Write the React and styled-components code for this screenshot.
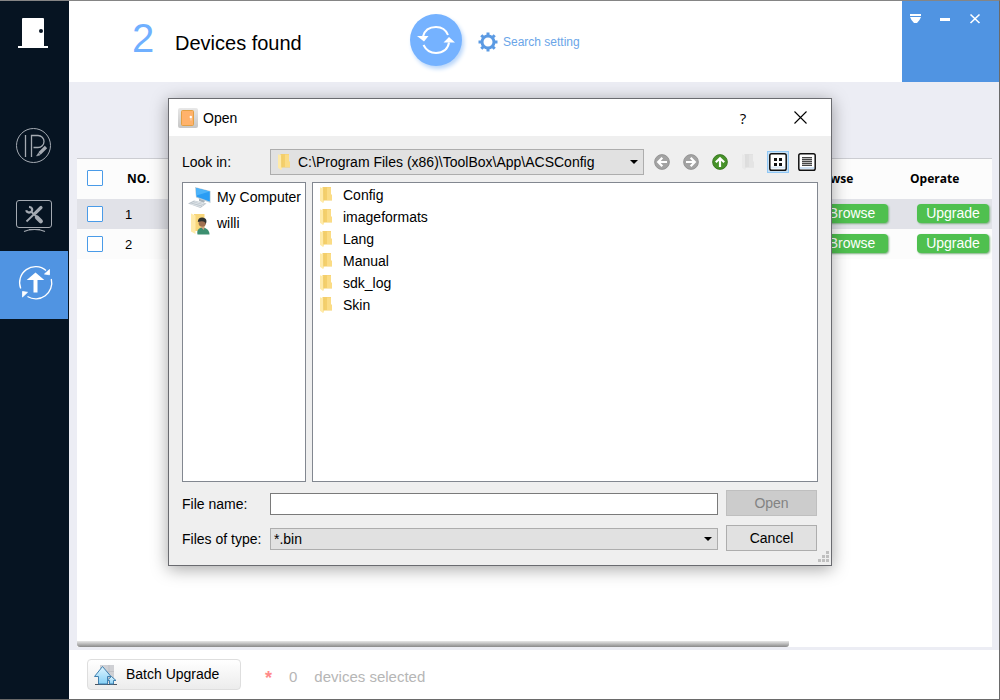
import React, { useState } from "react";
import styled, { createGlobalStyle, css } from "styled-components";

const GlobalStyle = createGlobalStyle`
  *, *::before, *::after { box-sizing: border-box; }
  body { margin: 0; background: #fff; }
  body, button, input, select { font-family: "Liberation Sans", Arial, sans-serif; font-size: 14px; color: #000; }
  svg { display: block; }
`;

const Window = styled.div`
  position: relative;
  display: flex;
  min-height: 100vh;
  border: 1px solid #6a6a6a;
  border-top-color: #858585;
  border-left: 0;
`;

/* ---------- side bar ---------- */
const Sidebar = styled.nav`
  flex: none;
  width: 69px;
  background: #061422;
`;
const Brand = styled.div`
  height: 114px;
  padding: 17px 18px;
`;
const NavList = styled.ul`
  margin: 0;
  padding: 0;
  list-style: none;
`;
const NavButton = styled.button`
  display: block;
  height: 68px;
  width: 68px;
  margin: 0;
  padding: 0;
  border: 0;
  background: ${(p) => (p.$active ? "#5094e2" : "transparent")};
  color: ${(p) => (p.$active ? "#fff" : "#a4aab2")};
`;

/* ---------- main column ---------- */
const Main = styled.main`
  flex: 1;
  min-width: 0;
  display: flex;
  flex-direction: column;
  background: #fff;
`;
const Header = styled.header`
  display: flex;
  align-items: center;
  height: 81px;
`;
const Summary = styled.h1`
  display: flex;
  align-items: center;
  flex: 0 0 341px;
  margin: 0;
  padding: 2px 0 0 63px;
  font-weight: 400;
  font-size: 20px;
  line-height: 24px;
`;
const Count = styled.span`
  width: 43px;
  padding-bottom: 10px;
  font-size: 40px;
  line-height: 40px;
  color: #70b0ff;
`;
const RefreshButton = styled.button`
  flex: none;
  width: 52px;
  height: 52px;
  margin: 0 0 3px;
  padding: 0;
  border: 0;
  border-radius: 50%;
  background: #75b2ff;
  box-shadow: 2px 3px 4px #b9d6fa;
`;
const SettingButton = styled.button`
  display: flex;
  align-items: center;
  gap: 5px;
  margin: 0 auto 0 16px;
  padding: 0;
  border: 0;
  background: none;
  color: #6aa5e8;
  font-size: 12px;
`;
const WindowControls = styled.div`
  align-self: stretch;
  display: flex;
  align-items: flex-start;
  width: 97px;
  padding: 7px;
  gap: 8px;
  background: #5094e2;
`;
const ControlButton = styled.button`
  width: 22px;
  height: 22px;
  margin: 0;
  padding: 0;
  border: 0;
  background: none;
`;

const Workspace = styled.section`
  flex: 1;
  display: flex;
  flex-direction: column;
  padding: 76px 7px 3px 8px;
  background: #ecedf4;
`;
const TablePanel = styled.div`
  flex: 1;
  display: flex;
  flex-direction: column;
  justify-content: space-between;
  border-top: 1px solid #cccdd2;
  background: #fff;
`;
const DeviceTable = styled.table`
  width: 100%;
  table-layout: fixed;
  border-collapse: collapse;
`;
const Col = styled.col`
  width: ${(p) => p.$w};
`;
const Row = styled.tr`
  height: ${(p) => (p.$head ? "40px" : "30px")};
  background: ${(p) => (p.$shaded ? "#e1e2e8" : "#fcfcfc")};
`;
const cell = css`
  text-align: left;
  white-space: nowrap;
`;
const Th = styled.th`
  ${cell}
  padding: 0 0 2px ${(p) => p.$pad || 0}px;
  font: 700 12px "Open Sans", sans-serif;
`;
const Td = styled.td`
  ${cell}
  padding: 0 0 0 ${(p) => p.$pad || 0}px;
  font-size: 13px;
`;
const CheckBox = styled.input`
  appearance: none;
  display: block;
  width: 16px;
  height: 16px;
  margin: 0;
  border: 1px solid #4a9be8;
  border-radius: 1px;
  background: #fff;
  &:checked { background: #5094e2; }
`;
const GreenButton = styled.button`
  display: block;
  width: 72px;
  height: 19px;
  margin: 0 0 2px;
  padding: 0;
  border: 0;
  border-radius: 4px;
  background: #4fc04f;
  box-shadow: 1px 1px 2px #7fae82;
  color: #fff;
  line-height: 19px;
`;
const ScrollTrack = styled.div`
  height: 6px;
`;
const ScrollThumb = styled.div`
  width: calc(100% * 7 / 9);
  height: 6px;
  border-radius: 0 0 3px 3px;
  background: linear-gradient(#e6e6e6, #c8c8c8 35%, #888);
`;

const Footer = styled.footer`
  display: flex;
  align-items: center;
  height: 49px;
  padding-left: 18px;
  color: #b6b6b6;
  font-size: 15px;
`;
const BatchButton = styled.button`
  display: flex;
  align-items: center;
  gap: 8px;
  width: 154px;
  height: 31px;
  margin: 0;
  padding: 0 0 1px 6px;
  border: 1px solid #dedede;
  border-radius: 4px;
  background: linear-gradient(#fff, #ececec);
`;
const Selection = styled.p`
  display: flex;
  gap: 17px;
  margin: 0;
  padding: 6px 0 0 24px;
`;
const Star = styled.span`
  color: #ff8a8a;
  font-weight: 700;
  line-height: 20px;
  font-size: 18px;
`;

/* ---------- dialog ---------- */
const DialogLayer = styled.div`
  position: absolute;
  inset: 0;
  display: flex;
  justify-content: center;
  align-items: flex-start;
  padding-top: 97px;
`;
const Dialog = styled.section`
  width: 664px;
  margin-left: 1px;
  border: 1px solid #6a6b70;
  background: #efefef;
  box-shadow: 0 3px 16px rgba(0, 0, 0, 0.36);
`;
const TitleBar = styled.header`
  display: flex;
  align-items: center;
  height: 37px;
  padding: 0 16px 0 9px;
  gap: 5px;
  background: #fff;
`;
const DialogTitle = styled.h2`
  flex: 1;
  margin: 0;
  font-size: 14px;
  font-weight: 400;
`;
const TitleButton = styled.button`
  display: grid;
  place-items: center;
  width: 30px;
  height: 30px;
  margin: 0 0 0 22px;
  padding: 0;
  border: 0;
  background: none;
  font: 15px "Open Sans", sans-serif;
`;
const DialogBody = styled.form`
  position: relative;
  display: flex;
  flex-direction: column;
  padding: 13px 13px 12px;
`;
const FormRow = styled.div`
  display: flex;
  align-items: center;
  height: ${(p) => (p.$gap ? "28px" : "26px")};
  margin-top: ${(p) => p.$gap || 0}px;
`;
const Label = styled.label`
  flex: none;
  width: 88px;
  white-space: nowrap;
`;
const SelectBox = styled.div`
  position: relative;
  flex: 1;
  min-width: 0;
  svg { position: absolute; left: 7px; top: 4px; pointer-events: none; }
  &::after {
    content: "";
    position: absolute;
    right: 6px;
    top: calc(50% - 2px);
    border: 4px solid transparent;
    border-top-color: #000;
    border-bottom: 0;
    pointer-events: none;
  }
`;
const Select = styled.select`
  appearance: none;
  display: block;
  width: 100%;
  height: ${(p) => (p.$icon ? "26px" : "22px")};
  margin: 0;
  padding: 0 20px 0 ${(p) => (p.$icon ? "27px" : "3px")};
  border: 1px solid #adadad;
  border-radius: 0;
  background: #e1e1e1;
`;
const TextInput = styled.input`
  flex: 1;
  min-width: 0;
  height: 22px;
  margin: 0;
  padding: 0 3px;
  border: 1px solid #7a7a7a;
  background: #fff;
`;
const PushButton = styled.button`
  flex: none;
  align-self: flex-start;
  width: 91px;
  height: 26px;
  margin: 0 1px 0 8px;
  padding: 0;
  border: 1px solid #adadad;
  background: #e1e1e1;
  &:disabled { border-color: #bfbfbf; background: #ccc; color: #838383; }
`;
const Tools = styled.div`
  display: flex;
  align-items: center;
  gap: 7px;
  padding-left: 7px;
  width: 174px;
`;
const ToolButton = styled.button`
  display: grid;
  place-items: center;
  flex: none;
  width: 22px;
  height: 22px;
  margin: 0;
  padding: 0;
  border: 1px solid ${(p) => (p.$on ? "#90c8f6" : "transparent")};
  background: ${(p) => (p.$on ? "#c8e0f4" : "none")};
`;
const Panes = styled.div`
  display: flex;
  gap: 6px;
  height: 300px;
  margin-top: 7px;
`;
const Pane = styled.ul`
  flex: ${(p) => (p.$side ? "none" : "1")};
  width: ${(p) => (p.$side ? "124px" : "auto")};
  margin: 0;
  padding: ${(p) => (p.$side ? "1px 0 0 5px" : "1px 0 0 6px")};
  border: 1px solid #828790;
  background: #fff;
  list-style: none;
`;
const Item = styled.li`
  display: flex;
  align-items: center;
  height: ${(p) => (p.$tall ? "26px" : "22px")};
  gap: ${(p) => (p.$tall ? "5px" : "8px")};
  white-space: nowrap;
`;
const Grip = styled.svg`
  position: absolute;
  right: 2px;
  bottom: 2px;
`;

/* ---------- drawings ---------- */
const DoorLogo = () => (
  <svg width="30" height="30" viewBox="0 0 30 30" fill="#fff" aria-label="ToolBox">
    <path d="M5 0h20a1 1 0 0 1 1 1v27h4v2H0v-2h4V1a1 1 0 0 1 1-1z" />
    <circle cx="23" cy="13" r="2" fill="#061422" />
  </svg>
);
const IpIcon = () => (
  <svg width="68" height="68" viewBox="0 0 68 68" fill="none" stroke="currentColor">
    <circle cx="33.500" cy="30.500" r="17" />
    <path d="M25.500 20v22M31.500 42V20.500h6.500a6 6 0 0 1 0 12h-4.500" strokeWidth="1.300" />
    <path d="M46 32l-6.500 6.500" strokeWidth="3.200" />
    <path d="M38.500 38l1.500 2-3.500 1z" fill="currentColor" strokeWidth=".5" />
  </svg>
);
const ToolsIcon = () => (
  <svg width="68" height="68" viewBox="0 0 68 68" fill="none" stroke="currentColor">
    <rect x="16.500" y="17.500" width="35" height="27" rx="2.500" />
    <path d="M24 48.500q4-2 10.500-2t10.500 2M29 46.500h11" strokeWidth="1.200" />
    <path d="M31 28.500L37.500 34.500" strokeWidth="2" />
    <path d="M37 34.500l3.800 3.800" strokeWidth="4.200" strokeLinecap="round" />
    <path d="M41 24.500L26.500 38.500" strokeWidth="1.800" />
    <path d="M41 24.500L35.500 29.800" strokeWidth="3.200" strokeLinecap="round" />
    <path d="M29 23.800c3 .2 4 2.500 2.500 4.700-2 1.800-4.700 1-5.300-1.300" strokeWidth="2.300" />
  </svg>
);
const UpgradeIcon = () => (
  <svg width="68" height="68" viewBox="0 0 68 68" fill="none" stroke="currentColor" strokeWidth="1.300">
    <path d="M20.700 37.500A16 16 0 0 1 46 19.500" />
    <path d="M51.300 28A16 16 0 0 1 27.500 45.500" />
    <path d="M44.500 23l5 .8v-5.300zM27.500 41.300l-5-.8v5.500z" fill="currentColor" strokeWidth=".8" />
    <path d="M35.500 21.500l8.800 7.500h-6.800v12.500h-4V29h-6.800z" fill="currentColor" stroke="none" />
  </svg>
);
const RefreshIcon = () => (
  <svg width="52" height="52" viewBox="0 0 52 52" fill="none" stroke="#fff" strokeWidth="2">
    <path d="M13 22.500C14.500 16.500 19.500 13 26 13c5.500 0 10 3 12 8" />
    <path d="M39 28.500C38 35 33 39 26 39c-5.500 0-10-3-12.500-8" />
    <path d="M7 22h11.500L14 27.500zM45 28.500H33.500L39 23z" fill="#fff" stroke="none" />
  </svg>
);
const GearIcon = () => (
  <svg width="20" height="20" viewBox="0 0 20 20" fill="none" stroke="#5b9ae3">
    <circle cx="10" cy="10" r="6" strokeWidth="3" />
    {[0, 45, 90, 135, 180, 225, 270, 315].map((a) => (
      <path key={a} d="M10 .500v3" strokeWidth="3" transform={`rotate(${a} 10 10)`} />
    ))}
  </svg>
);
const MenuGlyph = () => (
  <svg width="22" height="22" viewBox="0 0 22 22" fill="#fff">
    <path d="M1 6h11v2H1zM1 9h11l-1.500 3L8 15H5l-2.500-3z" />
  </svg>
);
const MinGlyph = () => (
  <svg width="22" height="22" viewBox="0 0 22 22" fill="#fff">
    <path d="M1 10h10v3H1z" />
  </svg>
);
const CloseGlyph = () => (
  <svg width="22" height="22" viewBox="0 0 22 22" stroke="#fff" strokeWidth="1.600">
    <path d="M1.500 6.500l9 8.500M10.500 6.500l-9 8.500" />
  </svg>
);
const BatchIcon = () => (
  <svg width="24" height="24" viewBox="0 0 24 24" strokeLinejoin="round">
    <defs>
      <linearGradient id="ice" x1="0" y1="0" x2="0" y2="1">
        <stop offset="0" stopColor="#dff5ff" />
        <stop offset="1" stopColor="#86d0f6" />
      </linearGradient>
    </defs>
    <path d="M6 3h14v18H6z" fill="#cfd0d4" />
    <path d="M12 9.500h8M15 3v14" stroke="#c0c1c6" />
    <path d="M1 22.500h22" stroke="#4c5560" />
    <path d="M8.500 4.500L17 14.500h-3.500V22h-9v-7.500H.500z" fill="url(#ice)" stroke="#3f7fae" />
    <path d="M17.500 14.500l4.500 4h-2.500V22h-4v-3.500H13z" fill="url(#ice)" stroke="#3f7fae" />
  </svg>
);
const AppIcon = () => (
  <svg width="20" height="20" viewBox="0 0 20 20">
    <defs>
      <linearGradient id="plate" x1="0" y1="0" x2="0" y2="1">
        <stop offset="0" stopColor="#e8e8e8" />
        <stop offset="1" stopColor="#c6c6c6" />
      </linearGradient>
    </defs>
    <rect width="20" height="20" rx="2" fill="url(#plate)" />
    <rect x="3.500" y="2.500" width="12" height="15" rx="1" fill="#ffb26b" stroke="#e2a044" />
    <circle cx="12.800" cy="9" r="1.200" fill="#fff" />
    <path d="M13 10v2.500" stroke="#f3dcc0" />
  </svg>
);
const FolderShape = ({ pale }) => (
  <>
    <path d="M3.500 1H12v7.500l1 .5v5.500H3.500z" fill={pale ? "#dedede" : "#f4cf6c"} />
    <path d="M8 1.500h4v7l1 .5v5H8z" fill={pale ? "#e4e4e4" : "#fbdc85"} />
    <path d="M1 1.200l3.500 1.300.5 13.500-1 1L1 14.800z" fill={pale ? "#e9e9e9" : "#ffeaa8"} />
    <path d="M4.700 2.500V14.500" stroke={pale ? "#d8d8d8" : "#ecc660"} strokeWidth=".8" />
  </>
);
const FolderIcon = ({ pale }) => (
  <svg width="16" height="18" viewBox="0 0 16 18">
    <FolderShape pale={pale} />
  </svg>
);
const ComputerIcon = () => (
  <svg width="24" height="24" viewBox="0 0 24 24">
    <path d="M7 2l15.500 4v12L8 12.500z" fill="#b9cdd9" />
    <path d="M8 3l13.800 3.500v10L8.600 11.700z" fill="#2a9df4" />
    <path d="M8 3l13.800 3.500-13.400 4z" fill="#4db4fa" />
    <path d="M11 13.500l6 2.200-1 2-5-1.700z" fill="#a7b2ba" />
    <path d="M0 18.500L6 15.500l12.500 3-6 4.500z" fill="#bcc5cc" />
    <path d="M2.500 18.800l10.500 3M4.500 17.500l10.500 2.800M6.500 16.500l10 2.500" stroke="#eef2f5" strokeWidth=".7" />
  </svg>
);
const UserFolderIcon = () => (
  <svg width="24" height="24" viewBox="0 0 24 24">
    <path d="M6 3h10.500v17H6z" fill="#f8d67a" />
    <path d="M3 2.500l4.500 2V23L3 20.500z" fill="#ffeaa8" />
    <path d="M9.500 23.500c-1-4 1-6.500 4.500-7 4.500.2 7.500 3 7.500 7z" fill="#3d8f70" />
    <path d="M12.500 16l3.500 3 .5-4z" fill="#cfa283" />
    <circle cx="14.300" cy="12" r="3.700" fill="#a07050" />
    <path d="M9.800 11c0-3.500 2.200-4.700 4.700-4.500 3.500.3 5 3 3.300 6.500-.8-2.500-2.800-3.500-8-2z" fill="#2f3230" />
  </svg>
);
const ArrowIcon = ({ turn, fill, edge }) => (
  <svg width="16" height="16" viewBox="0 0 16 16">
    <circle cx="8" cy="8" r="7.400" fill={fill} stroke={edge} strokeWidth=".8" />
    <path d="M8 13V4.500M3.800 8.300L8 4.200l4.200 4.100" fill="none" stroke="#fff" strokeWidth="2.200" transform={`rotate(${turn} 8 8)`} />
  </svg>
);
const ListViewIcon = () => (
  <svg width="18" height="18" viewBox="0 0 18 18">
    <rect x=".8" y=".8" width="16.400" height="16.400" rx="1.800" fill="#fff" stroke="#111" strokeWidth="1.500" />
    <path d="M2 14.500h14" stroke="#dbeaf8" strokeWidth="2" />
    <path d="M5 5h3v3H5zM10 5h3v3h-3zM5 10h3v3H5zM10 10h3v3h-3z" fill="#111" />
  </svg>
);
const DetailViewIcon = () => (
  <svg width="18" height="18" viewBox="0 0 18 18">
    <rect x=".8" y=".8" width="16.400" height="16.400" rx="1.800" fill="#fff" stroke="#111" strokeWidth="1.500" />
    <path d="M2 15h14" stroke="#cfe2f5" strokeWidth="2" />
    <path d="M4 4h10v9H4z" fill="#b8b8b8" />
    <path d="M4 4.500h10M4 6.500h10M4 8.500h10M4 10.500h10M4 12.500h10" stroke="#444" />
  </svg>
);
const XIcon = () => (
  <svg width="13" height="13" viewBox="0 0 13 13" stroke="#000" strokeWidth="1.100">
    <path d="M.500 .500l12 12M12.500 .500l-12 12" />
  </svg>
);

const devices = [1, 2];
const folders = ["Config", "imageformats", "Lang", "Manual", "sdk_log", "Skin"];

function FileDialog() {
  const [name, setName] = useState("");
  return (
    <Dialog role="dialog" aria-labelledby="dialog-title">
      <TitleBar>
        <AppIcon />
        <DialogTitle id="dialog-title">Open</DialogTitle>
        <TitleButton type="button" aria-label="Help">?</TitleButton>
        <TitleButton type="button" aria-label="Close"><XIcon /></TitleButton>
      </TitleBar>
      <DialogBody onSubmit={(e) => e.preventDefault()}>
        <FormRow>
          <Label htmlFor="look-in">Look in:</Label>
          <SelectBox>
            <Select id="look-in" $icon>
              <option>C:\Program Files (x86)\ToolBox\App\ACSConfig</option>
            </Select>
            <FolderIcon />
          </SelectBox>
          <Tools>
            <ToolButton type="button" aria-label="Back"><ArrowIcon turn={-90} fill="#a3a3a3" edge="#8c8c8c" /></ToolButton>
            <ToolButton type="button" aria-label="Forward"><ArrowIcon turn={90} fill="#a3a3a3" edge="#8c8c8c" /></ToolButton>
            <ToolButton type="button" aria-label="Parent directory"><ArrowIcon turn={0} fill="#47922a" edge="#2f6e16" /></ToolButton>
            <ToolButton type="button" aria-label="New folder"><FolderIcon pale /></ToolButton>
            <ToolButton type="button" aria-label="List view" $on><ListViewIcon /></ToolButton>
            <ToolButton type="button" aria-label="Detail view"><DetailViewIcon /></ToolButton>
          </Tools>
        </FormRow>
        <Panes>
          <Pane $side>
            <Item $tall><ComputerIcon />My Computer</Item>
            <Item $tall><UserFolderIcon />willi</Item>
          </Pane>
          <Pane>
            {folders.map((f) => (
              <Item key={f}><FolderIcon />{f}</Item>
            ))}
          </Pane>
        </Panes>
        <FormRow $gap={8}>
          <Label htmlFor="file-name">File name:</Label>
          <TextInput id="file-name" value={name} onChange={(e) => setName(e.target.value)} />
          <PushButton type="submit" disabled={!name}>Open</PushButton>
        </FormRow>
        <FormRow $gap={7}>
          <Label htmlFor="file-type">Files of type:</Label>
          <SelectBox>
            <Select id="file-type">
              <option>*.bin</option>
            </Select>
          </SelectBox>
          <PushButton type="button">Cancel</PushButton>
        </FormRow>
        <Grip width="11" height="12" viewBox="0 0 11 12" fill="#bfbfbf">
          <path d="M8 0h3v3H8zM4 4h3v3H4zM8 4h3v3H8zM0 8h3v3H0zM4 8h3v3H4zM8 8h3v3H8z" />
        </Grip>
      </DialogBody>
    </Dialog>
  );
}

export default function App() {
  return (
    <>
      <GlobalStyle />
      <Window>
        <Sidebar>
          <Brand><DoorLogo /></Brand>
          <NavList>
            <li><NavButton aria-label="IP settings"><IpIcon /></NavButton></li>
            <li><NavButton aria-label="System tools"><ToolsIcon /></NavButton></li>
            <li><NavButton aria-label="Device upgrade" $active><UpgradeIcon /></NavButton></li>
          </NavList>
        </Sidebar>
        <Main>
          <Header>
            <Summary><Count>2</Count>Devices found</Summary>
            <RefreshButton aria-label="Refresh"><RefreshIcon /></RefreshButton>
            <SettingButton><GearIcon />Search setting</SettingButton>
            <WindowControls>
              <ControlButton aria-label="Menu"><MenuGlyph /></ControlButton>
              <ControlButton aria-label="Minimize"><MinGlyph /></ControlButton>
              <ControlButton aria-label="Close"><CloseGlyph /></ControlButton>
            </WindowControls>
          </Header>
          <Workspace>
            <TablePanel>
              <DeviceTable>
                <colgroup>
                  <Col $w="48px" />
                  <Col $w="auto" />
                  <Col $w="101px" />
                  <Col $w="85px" />
                </colgroup>
                <thead>
                  <Row $head>
                    <Th $pad={10}><CheckBox type="checkbox" aria-label="Select all devices" /></Th>
                    <Th $pad={2}>NO.</Th>
                    <Th $pad={3}>Browse</Th>
                    <Th $pad={3}>Operate</Th>
                  </Row>
                </thead>
                <tbody>
                  {devices.map((n) => (
                    <Row key={n} $shaded={n % 2 === 1}>
                      <Td $pad={10}><CheckBox type="checkbox" aria-label={`Select device ${n}`} /></Td>
                      <Td>{n}</Td>
                      <Td $pad={10}><GreenButton>Browse</GreenButton></Td>
                      <Td $pad={10}><GreenButton>Upgrade</GreenButton></Td>
                    </Row>
                  ))}
                </tbody>
              </DeviceTable>
              <ScrollTrack><ScrollThumb /></ScrollTrack>
            </TablePanel>
          </Workspace>
          <Footer>
            <BatchButton><BatchIcon />Batch Upgrade</BatchButton>
            <Selection><Star>*</Star><span>0</span><span>devices selected</span></Selection>
          </Footer>
        </Main>
        <DialogLayer><FileDialog /></DialogLayer>
      </Window>
    </>
  );
}
